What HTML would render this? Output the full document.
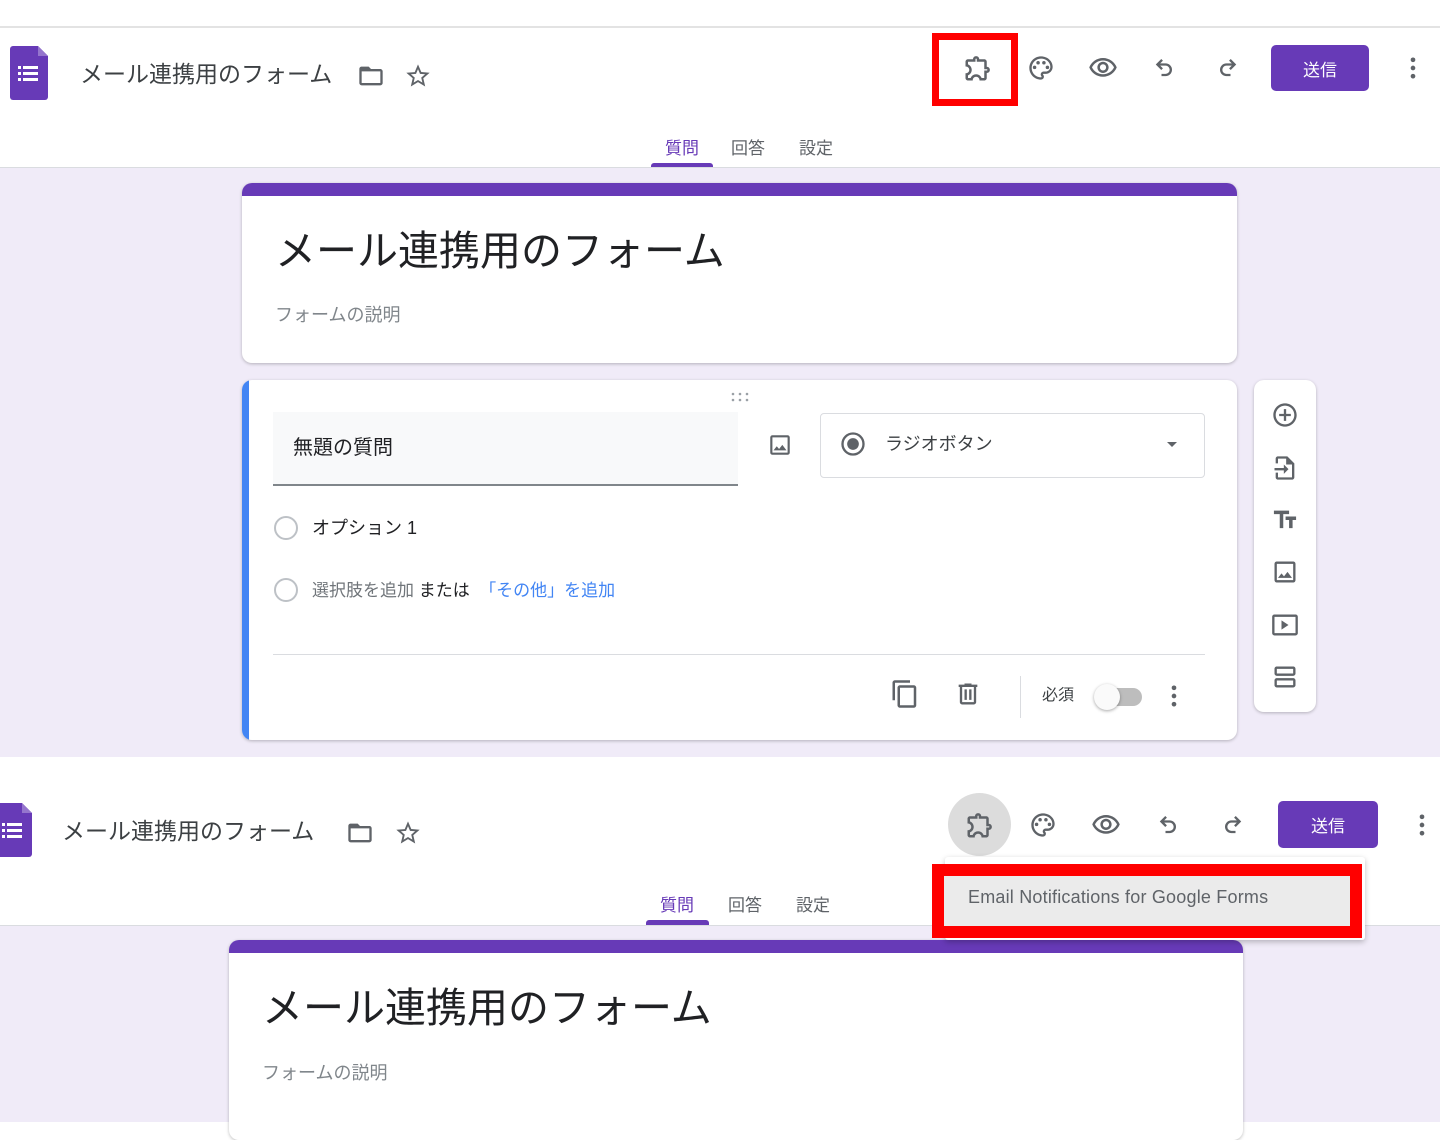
<!DOCTYPE html>
<html><head><meta charset="utf-8">
<style>
*{box-sizing:border-box;margin:0;padding:0}
body{width:1440px;height:1122px;position:relative;overflow:hidden;background:#fff;font-family:"Liberation Sans","Noto Sans CJK JP",sans-serif;color:#202124}
.a{position:absolute}
.lav{background:#f0ebf8}
.card{position:absolute;background:#fff;border-radius:10px;box-shadow:0 1px 3px rgba(0,0,0,.25)}
.t{position:absolute;white-space:nowrap;line-height:1}
svg.i{position:absolute;fill:#5f6368}
.send{position:absolute;background:#673ab7;color:#fff;border-radius:5px;font-size:17px;display:flex;align-items:center;justify-content:center}
.tab{position:absolute;font-size:16px;color:#5f6368}
</style></head><body>

<div class="a" style="left:0;top:26px;width:1440px;height:2px;background:#e3e3e3"></div>
<div class="a" style="left:0;top:167px;width:1440px;height:1px;background:#dadce0"></div>
<div class="a lav" style="left:0;top:168px;width:1440px;height:589px"></div>

<svg class="a" style="left:10px;top:46px" width="38" height="54" viewBox="0 0 38 54"><path d="M3 0h25l10 10v41a3 3 0 0 1-3 3H3a3 3 0 0 1-3-3V3a3 3 0 0 1 3-3z" fill="#673ab7"/><path d="M28 0v10h10z" fill="#9575cd"/><g fill="#fff"><rect x="8" y="20" width="3" height="3"/><rect x="13" y="20" width="15" height="3"/><rect x="8" y="26" width="3" height="3"/><rect x="13" y="26" width="15" height="3"/><rect x="8" y="32" width="3" height="3"/><rect x="13" y="32" width="15" height="3"/></g></svg>
<div class="t" style="left:80px;top:63px;font-size:23px;color:#3c4043">メール連携用のフォーム</div>
<svg class="i" style="left:357px;top:62px" width="28" height="28" viewBox="0 0 24 24"><path d="M20 6h-8l-2-2H4c-1.1 0-2 .9-2 2v12c0 1.1.9 2 2 2h16c1.1 0 2-.9 2-2V8c0-1.1-.9-2-2-2zm0 12H4V8h16v10z"/></svg>
<svg class="i" style="left:404px;top:62px" width="28" height="28" viewBox="0 0 24 24"><path d="M22 9.24l-7.19-.62L12 2 9.19 8.63 2 9.24l5.46 4.73L5.82 21 12 17.27 18.18 21l-1.63-7.03L22 9.24zM12 15.4l-3.76 2.27 1-4.28-3.32-2.88 4.38-.38L12 6.1l1.71 4.04 4.38.38-3.32 2.88 1 4.28L12 15.4z"/></svg>

<div class="a" style="left:932px;top:33px;width:86px;height:73px;border:7px solid #f00"></div>
<svg class="i" style="left:963px;top:53px" width="30" height="30" viewBox="0 0 24 24"><path d="M10.5 4.5c.28 0 .5.22.5.5v2h6v6h2c.28 0 .5.22.5.5s-.22.5-.5.5h-2v6h-2.12c-.68-1.75-2.39-3-4.38-3s-3.7 1.25-4.38 3H4v-2.12c1.75-.68 3-2.39 3-4.38 0-1.99-1.24-3.7-2.99-4.38L4 7h6V5c0-.28.22-.5.5-.5m0-2C9.12 2.5 8 3.62 8 5H4c-1.1 0-1.99.9-1.99 2v3.8h.29c1.49 0 2.7 1.21 2.7 2.7s-1.21 2.7-2.7 2.7H2V20c0 1.1.9 2 2 2h3.8v-.3c0-1.49 1.21-2.7 2.7-2.7s2.7 1.21 2.7 2.7v.3H17c1.1 0 2-.9 2-2v-4c1.38 0 2.5-1.12 2.5-2.5S20.38 11 19 11V7c0-1.1-.9-2-2-2h-4c0-1.38-1.12-2.5-2.5-2.5z"/></svg>
<svg class="i" style="left:1027px;top:54px" width="28" height="28" viewBox="0 0 24 24"><path d="M12 22C6.49 22 2 17.51 2 12S6.49 2 12 2s10 4.04 10 9c0 3.31-2.690 6-6 6h-1.77c-.28 0-.5.22-.5.5 0 .12.05.23.13.33.41.47.64 1.06.64 1.67A2.5 2.5 0 0 1 12 22zm0-18c-4.41 0-8 3.59-8 8s3.59 8 8 8c.28 0 .5-.22.5-.5a.54.54 0 0 0-.14-.35c-.41-.46-.63-1.05-.63-1.65a2.5 2.5 0 0 1 2.5-2.5H16c2.21 0 4-1.79 4-4 0-3.86-3.59-7-8-7z"/><circle cx="6.5" cy="11.5" r="1.5"/><circle cx="9.5" cy="7.5" r="1.5"/><circle cx="14.5" cy="7.5" r="1.5"/><circle cx="17.5" cy="11.5" r="1.5"/></svg>
<svg class="i" style="left:1088px;top:53px" width="30" height="30" viewBox="0 0 24 24"><path d="M12 6a9.77 9.77 0 0 1 8.82 5.5C19.17 14.87 15.79 17 12 17s-7.17-2.13-8.82-5.5A9.77 9.77 0 0 1 12 6m0-2C7 4 2.73 7.11 1 11.5 2.73 15.89 7 19 12 19s9.27-3.11 11-7.5C21.27 7.11 17 4 12 4zm0 5a2.5 2.5 0 0 1 0 5 2.5 2.5 0 0 1 0-5m0-2c-2.48 0-4.5 2.02-4.5 4.5S9.52 16 12 16s4.5-2.02 4.5-4.5S14.48 7 12 7z"/></svg>
<svg class="i" style="left:1151px;top:54px" width="28" height="28" viewBox="0 0 24 24"><path d="M12.5 8H7.91l2.3-2.29L8.8 4.3 4.09 9l4.7 4.7 1.42-1.41L7.91 10h4.59a3.5 3.5 0 0 1 0 7H9v2h3.5a5.5 5.5 0 0 0 0-11z"/></svg>
<svg class="i" style="left:1213px;top:54px" width="28" height="28" viewBox="0 0 24 24"><path d="M11.5 8h4.59l-2.3-2.29L15.2 4.3 19.91 9l-4.7 4.7-1.42-1.41L16.09 10H11.5a3.5 3.5 0 0 0 0 7H15v2h-3.5a5.5 5.5 0 0 1 0-11z"/></svg>
<div class="send" style="left:1271px;top:45px;width:98px;height:46px">送信</div>
<svg class="i" style="left:1399px;top:54px" width="28" height="28" viewBox="0 0 24 24"><circle cx="12" cy="5" r="2"/><circle cx="12" cy="12" r="2"/><circle cx="12" cy="19" r="2"/></svg>

<div class="tab" style="left:665px;top:134px;color:#673ab7;font-size:17px">質問</div>
<div class="a" style="left:651px;top:163px;width:62px;height:4px;background:#673ab7;border-radius:3px 3px 0 0"></div>
<div class="tab" style="left:731px;top:134px;font-size:17px">回答</div>
<div class="tab" style="left:799px;top:134px;font-size:17px">設定</div>

<div class="card" style="left:242px;top:183px;width:995px;height:180px;overflow:hidden">
 <div class="a" style="left:0;top:0;width:100%;height:13px;background:#673ab7"></div>
 <div class="t" style="left:33px;top:48px;font-size:41px;color:#202124">メール連携用のフォーム</div>
 <div class="t" style="left:33px;top:123px;font-size:18px;color:#80868b">フォームの説明</div>
</div>

<div class="card" style="left:242px;top:380px;width:995px;height:360px;overflow:hidden">
 <div class="a" style="left:0;top:0;width:7px;height:100%;background:#4285f4"></div>
 <svg class="a" style="left:488px;top:11px" width="20" height="12" viewBox="0 0 20 12" fill="#9aa0a6"><circle cx="3" cy="3" r="1.3"/><circle cx="10" cy="3" r="1.3"/><circle cx="17" cy="3" r="1.3"/><circle cx="3" cy="9" r="1.3"/><circle cx="10" cy="9" r="1.3"/><circle cx="17" cy="9" r="1.3"/></svg>
 <div class="a" style="left:31px;top:32px;width:465px;height:74px;background:#f8f9fa;border-bottom:2px solid #80868b"></div>
 <div class="t" style="left:51px;top:58px;font-size:20px;color:#202124">無題の質問</div>
 <svg class="i" style="left:525px;top:52px" width="26" height="26" viewBox="0 0 24 24"><path d="M19 3H5a2 2 0 0 0-2 2v14a2 2 0 0 0 2 2h14a2 2 0 0 0 2-2V5a2 2 0 0 0-2-2zm0 16H5V5h14v14zm-4.86-7.14l-3 3.86L9 13.14 6 17h12l-3.86-5.14z"/></svg>
 <div class="a" style="left:578px;top:33px;width:385px;height:65px;border:1px solid #dadce0;border-radius:4px"></div>
 <svg class="a" style="left:597px;top:50px" width="28" height="28" viewBox="0 0 24 24"><circle cx="12" cy="12" r="9" fill="none" stroke="#5f6368" stroke-width="2"/><circle cx="12" cy="12" r="5" fill="#5f6368"/></svg>
 <div class="t" style="left:643px;top:55px;font-size:18px;color:#3c4043">ラジオボタン</div>
 <div class="a" style="left:925px;top:62px;width:0;height:0;border-left:5px solid transparent;border-right:5px solid transparent;border-top:5px solid #5f6368"></div>
 <div class="a" style="left:32px;top:136px;width:24px;height:24px;border:2px solid #bdc1c6;border-radius:50%"></div>
 <div class="t" style="left:70px;top:139px;font-size:18px;color:#202124">オプション 1</div>
 <div class="a" style="left:32px;top:198px;width:24px;height:24px;border:2px solid #bdc1c6;border-radius:50%"></div>
 <div class="t" style="left:70px;top:202px;font-size:17px;color:#70757a">選択肢を追加 <span style="color:#202124">または</span> &nbsp;<span style="color:#4285f4">「その他」を追加</span></div>
 <div class="a" style="left:31px;top:274px;width:932px;height:1px;background:#dadce0"></div>
 <svg class="i" style="left:648px;top:299px" width="30" height="30" viewBox="0 0 24 24"><path d="M16 1H4c-1.1 0-2 .9-2 2v14h2V3h12V1zm3 4H8c-1.1 0-2 .9-2 2v14c0 1.1.9 2 2 2h11c1.1 0 2-.9 2-2V7c0-1.1-.9-2-2-2zm0 16H8V7h11v14z"/></svg>
 <svg class="i" style="left:712px;top:300px" width="28" height="28" viewBox="0 0 24 24"><path d="M15 4V3H9v1H4v2h1v13c0 1.1.9 2 2 2h10c1.1 0 2-.9 2-2V6h1V4h-5zm2 15H7V6h10v13zM9 8h2v9H9zm4 0h2v9h-2z"/></svg>
 <div class="a" style="left:778px;top:296px;width:1px;height:42px;background:#dadce0"></div>
 <div class="t" style="left:800px;top:308px;font-size:16px;color:#3c4043">必須</div>
 <div class="a" style="left:860px;top:308px;width:40px;height:18px;border-radius:9px;background:#bdbdbd"></div>
 <div class="a" style="left:852px;top:304px;width:26px;height:26px;border-radius:50%;background:#fafafa;box-shadow:0 1px 3px rgba(0,0,0,.35)"></div>
 <svg class="i" style="left:918px;top:302px" width="28" height="28" viewBox="0 0 24 24"><circle cx="12" cy="5" r="2"/><circle cx="12" cy="12" r="2"/><circle cx="12" cy="19" r="2"/></svg>
</div>

<div class="card" style="left:1254px;top:380px;width:62px;height:332px">
 <svg class="i" style="left:17px;top:21px" width="28" height="28" viewBox="0 0 24 24"><path d="M13 7h-2v4H7v2h4v4h2v-4h4v-2h-4V7zm-1-5C6.48 2 2 6.48 2 12s4.48 10 10 10 10-4.48 10-10S17.52 2 12 2zm0 18c-4.41 0-8-3.59-8-8s3.59-8 8-8 8 3.590 8 8-3.59 8-8 8z"/></svg>
 <svg class="i" style="left:17px;top:74px" width="28" height="28" viewBox="0 0 24 24"><path d="M14 2H6c-1.1 0-2 .9-2 2v4h2V4h7v5h5v11H6v-4H4v4c0 1.1.9 2 2 2h12c1.1 0 2-.9 2-2V8l-6-6zM11 17l4-4-4-4v3H3v2h8v3z"/></svg>
 <svg class="i" style="left:17px;top:126px" width="28" height="28" viewBox="0 0 24 24"><path d="M2.5 4v3h5v12h3V7h5V4h-13zm19 5h-9v3h3v7h3v-7h3V9z"/></svg>
 <svg class="i" style="left:17px;top:178px" width="28" height="28" viewBox="0 0 24 24"><path d="M19 3H5a2 2 0 0 0-2 2v14a2 2 0 0 0 2 2h14a2 2 0 0 0 2-2V5a2 2 0 0 0-2-2zm0 16H5V5h14v14zm-4.86-7.14l-3 3.86L9 13.14 6 17h12l-3.86-5.14z"/></svg>
 <svg class="i" style="left:17px;top:231px" width="28" height="28" viewBox="0 0 24 24"><path d="M21 3H3c-1.1 0-2 .9-2 2v14c0 1.1.9 2 2 2h18c1.1 0 2-.9 2-2V5c0-1.1-.9-2-2-2zm0 16H3V5h18v14zM9 8v8l6-4z"/></svg>
 <svg class="i" style="left:17px;top:283px" width="28" height="28" viewBox="0 0 24 24"><path d="M19 13H5c-1.1 0-2 .9-2 2v4c0 1.1.9 2 2 2h14c1.1 0 2-.9 2-2v-4c0-1.1-.9-2-2-2zm0 6H5v-4h14v4zm0-16H5c-1.1 0-2 .9-2 2v4c0 1.1.9 2 2 2h14c1.1 0 2-.9 2-2V5c0-1.1-.9-2-2-2zm0 6H5V5h14v4z"/></svg>
</div>

<div class="a" style="left:0;top:925px;width:1440px;height:1px;background:#dadce0"></div>
<div class="a lav" style="left:0;top:926px;width:1440px;height:196px"></div>

<svg class="a" style="left:-6px;top:803px" width="38" height="54" viewBox="0 0 38 54"><path d="M3 0h25l10 10v41a3 3 0 0 1-3 3H3a3 3 0 0 1-3-3V3a3 3 0 0 1 3-3z" fill="#673ab7"/><path d="M28 0v10h10z" fill="#9575cd"/><g fill="#fff"><rect x="8" y="20" width="3" height="3"/><rect x="13" y="20" width="15" height="3"/><rect x="8" y="26" width="3" height="3"/><rect x="13" y="26" width="15" height="3"/><rect x="8" y="32" width="3" height="3"/><rect x="13" y="32" width="15" height="3"/></g></svg>
<div class="t" style="left:62px;top:820px;font-size:23px;color:#3c4043">メール連携用のフォーム</div>
<svg class="i" style="left:346px;top:819px" width="28" height="28" viewBox="0 0 24 24"><path d="M20 6h-8l-2-2H4c-1.1 0-2 .9-2 2v12c0 1.1.9 2 2 2h16c1.1 0 2-.9 2-2V8c0-1.1-.9-2-2-2zm0 12H4V8h16v10z"/></svg>
<svg class="i" style="left:394px;top:819px" width="28" height="28" viewBox="0 0 24 24"><path d="M22 9.24l-7.19-.62L12 2 9.19 8.63 2 9.24l5.46 4.73L5.82 21 12 17.27 18.18 21l-1.63-7.03L22 9.24zM12 15.4l-3.76 2.27 1-4.28-3.32-2.88 4.38-.38L12 6.1l1.71 4.04 4.38.38-3.32 2.88 1 4.28L12 15.4z"/></svg>

<div class="a" style="left:948px;top:793px;width:63px;height:63px;border-radius:50%;background:#dcdcdc"></div>
<svg class="i" style="left:965px;top:810px" width="30" height="30" viewBox="0 0 24 24"><path d="M10.5 4.5c.28 0 .5.22.5.5v2h6v6h2c.28 0 .5.22.5.5s-.22.5-.5.5h-2v6h-2.12c-.68-1.75-2.39-3-4.38-3s-3.7 1.25-4.38 3H4v-2.12c1.75-.68 3-2.39 3-4.38 0-1.99-1.24-3.7-2.99-4.38L4 7h6V5c0-.28.22-.5.5-.5m0-2C9.12 2.5 8 3.62 8 5H4c-1.1 0-1.99.9-1.99 2v3.8h.29c1.49 0 2.7 1.21 2.7 2.7s-1.21 2.7-2.7 2.7H2V20c0 1.1.9 2 2 2h3.8v-.3c0-1.49 1.21-2.7 2.7-2.7s2.7 1.21 2.7 2.7v.3H17c1.1 0 2-.9 2-2v-4c1.38 0 2.5-1.12 2.5-2.5S20.38 11 19 11V7c0-1.1-.9-2-2-2h-4c0-1.38-1.12-2.5-2.5-2.5z"/></svg>
<svg class="i" style="left:1029px;top:811px" width="28" height="28" viewBox="0 0 24 24"><path d="M12 22C6.49 22 2 17.51 2 12S6.49 2 12 2s10 4.04 10 9c0 3.31-2.69 6-6 6h-1.77c-.28 0-.5.22-.5.5 0 .12.05.23.13.33.41.47.64 1.06.64 1.67A2.5 2.5 0 0 1 12 22zm0-18c-4.41 0-8 3.59-8 8s3.59 8 8 8c.28 0 .5-.22.5-.5a.54.54 0 0 0-.14-.35c-.41-.46-.63-1.05-.63-1.65a2.5 2.5 0 0 1 2.5-2.5H16c2.21 0 4-1.79 4-4 0-3.86-3.59-7-8-7z"/><circle cx="6.5" cy="11.5" r="1.5"/><circle cx="9.5" cy="7.5" r="1.5"/><circle cx="14.5" cy="7.5" r="1.5"/><circle cx="17.5" cy="11.5" r="1.5"/></svg>
<svg class="i" style="left:1091px;top:810px" width="30" height="30" viewBox="0 0 24 24"><path d="M12 6a9.77 9.77 0 0 1 8.82 5.5C19.17 14.87 15.79 17 12 17s-7.17-2.13-8.82-5.5A9.77 9.77 0 0 1 12 6m0-2C7 4 2.73 7.11 1 11.5 2.73 15.89 7 19 12 19s9.27-3.11 11-7.5C21.27 7.11 17 4 12 4zm0 5a2.5 2.5 0 0 1 0 5 2.5 2.5 0 0 1 0-5m0-2c-2.48 0-4.5 2.02-4.5 4.5S9.52 16 12 16s4.5-2.02 4.5-4.5S14.48 7 12 7z"/></svg>
<svg class="i" style="left:1155px;top:811px" width="28" height="28" viewBox="0 0 24 24"><path d="M12.5 8H7.91l2.3-2.29L8.8 4.3 4.09 9l4.7 4.7 1.42-1.41L7.91 10h4.59a3.5 3.5 0 0 1 0 7H9v2h3.5a5.5 5.5 0 0 0 0-11z"/></svg>
<svg class="i" style="left:1218px;top:811px" width="28" height="28" viewBox="0 0 24 24"><path d="M11.5 8h4.59l-2.3-2.29L15.2 4.3 19.91 9l-4.7 4.7-1.42-1.41L16.09 10H11.5a3.5 3.5 0 0 0 0 7H15v2h-3.5a5.5 5.5 0 0 1 0-11z"/></svg>
<div class="send" style="left:1278px;top:801px;width:100px;height:47px">送信</div>
<svg class="i" style="left:1408px;top:811px" width="28" height="28" viewBox="0 0 24 24"><circle cx="12" cy="5" r="2"/><circle cx="12" cy="12" r="2"/><circle cx="12" cy="19" r="2"/></svg>

<div class="tab" style="left:660px;top:891px;color:#673ab7;font-size:17px">質問</div>
<div class="a" style="left:646px;top:920px;width:63px;height:5px;background:#673ab7;border-radius:3px 3px 0 0"></div>
<div class="tab" style="left:728px;top:891px;font-size:17px">回答</div>
<div class="tab" style="left:796px;top:891px;font-size:17px">設定</div>

<div class="card" style="left:229px;top:940px;width:1014px;height:200px;overflow:hidden">
 <div class="a" style="left:0;top:0;width:100%;height:13px;background:#673ab7"></div>
 <div class="t" style="left:33px;top:48px;font-size:41px;color:#202124">メール連携用のフォーム</div>
 <div class="t" style="left:33px;top:124px;font-size:18px;color:#80868b">フォームの説明</div>
</div>

<div class="a" style="left:945px;top:857px;width:420px;height:83px;background:#fff;box-shadow:0 2px 6px rgba(0,0,0,.25);border-radius:3px"></div>
<div class="a" style="left:932px;top:864px;width:430px;height:74px;border:12px solid #f00;background:#ebebeb"></div>
<div class="t" style="left:968px;top:888px;font-size:18px;color:#5f6368;letter-spacing:0.2px">Email Notifications for Google Forms</div>

</body></html>
